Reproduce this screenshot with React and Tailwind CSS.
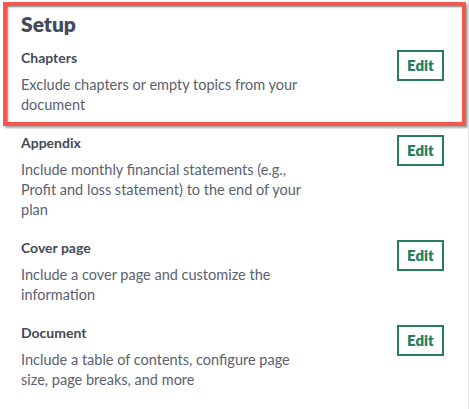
import React from 'react';

const items = [
    { title: 'Chapters', text: 'Exclude chapters or empty topics from your document' },
    { title: 'Appendix', text: 'Include monthly financial statements (e.g., Profit and loss statement) to the end of your plan' },
    { title: 'Cover page', text: 'Include a cover page and customize the information' },
    { title: 'Document', text: 'Include a table of contents, configure page size, page breaks, and more' },
];

export default function App() {
    return (
        <div className="relative w-[469px] h-[409px] bg-white border-r border-[#e4e4e4] font-['Lato',sans-serif] overflow-hidden">
            <div className="pl-[21px] pr-[24px] pt-[10px]">
                <h2 className="text-[21px] leading-[28px] font-extrabold text-[#434a59]">Setup</h2>
                <div className="mt-[10px] flex flex-col gap-[18px]">
                    {items.map((item) => (
                        <div key={item.title} className="flex justify-between items-start">
                            <div className="w-[292px]">
                                <h3 className="text-[14px] leading-[20px] font-bold text-[#434a59]">{item.title}</h3>
                                <p className="mt-[7px] text-[14.5px] leading-[20px] text-[#5a6170]">{item.text}</p>
                            </div>
                            <button className="mt-[2px] w-[47px] h-[31px] border-2 border-[#267e5f] text-[#267e5f] text-[15px] font-extrabold flex items-center justify-center">
                                Edit
                            </button>
                        </div>
                    ))}
                </div>
            </div>
            <div className="absolute left-[3px] top-[2px] w-[463px] h-[124px] border-4 border-[#f4584a] shadow-[2px_2px_2px_rgba(0,0,0,0.35),inset_1px_1px_2px_rgba(0,0,0,0.5)] pointer-events-none" />
        </div>
    );
}
